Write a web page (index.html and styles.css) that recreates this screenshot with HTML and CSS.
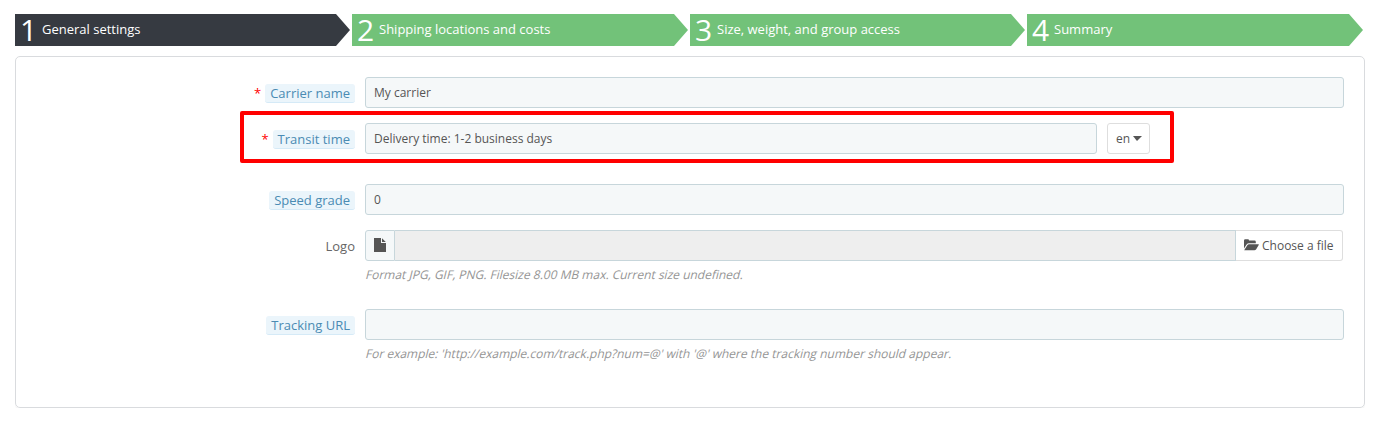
FILE: index.html
```html
<!DOCTYPE html>
<html lang="en">
<head>
<meta charset="utf-8">
<title>Carriers</title>
<link rel="stylesheet" href="styles.css">
</head>
<body>
<ol class="steps">
  <li class="step step-active"><span class="step-number">1</span><span class="step-label">General settings</span></li>
  <li class="step"><span class="step-number">2</span><span class="step-label">Shipping locations and costs</span></li>
  <li class="step"><span class="step-number">3</span><span class="step-label">Size, weight, and group access</span></li>
  <li class="step"><span class="step-number">4</span><span class="step-label">Summary</span></li>
</ol>
<main class="panel">
  <div class="row">
    <div class="label"><span class="required">*</span><span class="tip">Carrier name</span></div>
    <div class="field">My carrier</div>
  </div>
  <div class="row row-transit">
    <div class="label"><span class="required">*</span><span class="tip">Transit time</span></div>
    <div class="translatable">
      <div class="field">Delivery time: 1-2 business days</div>
      <button class="language" type="button">en<span class="caret"></span></button>
    </div>
    <div class="highlight"></div>
  </div>
  <div class="row">
    <div class="label"><span class="tip">Speed grade</span></div>
    <div class="field">0</div>
  </div>
  <div class="row">
    <div class="label">Logo</div>
    <div>
      <div class="upload">
        <span class="addon"><svg class="file-icon" width="12" height="14" viewBox="0 0 12 14"><path d="M0 0H7V5H12V14H0Z M8 0.2L11.8 4H8Z"/></svg></span>
        <span class="filename"></span>
        <button class="choose" type="button"><svg class="folder-icon" width="15" height="12" viewBox="0 0 15 12"><path d="M0 9.6V1.4Q0 .2 1.2 .2H4Q5 .2 5 1.6H10.6Q11.8 1.6 11.8 2.8V4.2H5Q3.5 4.2 2.6 5.4Z M.2 11.2L3.3 6.2Q3.9 5.2 5 5.2H14.3Q15.2 5.2 14.7 6L12.2 10.2Q11.5 11.3 10.4 11.3H.6Q.2 11.3 .2 11.2Z"/></svg>Choose a file</button>
      </div>
      <p class="help">Format JPG, GIF, PNG. Filesize 8.00 MB max. Current size undefined.</p>
    </div>
  </div>
  <div class="row">
    <div class="label"><span class="tip">Tracking URL</span></div>
    <div>
      <div class="field"></div>
      <p class="help">For example: 'http://example.com/track.php?num=@' with '@' where the tracking number should appear.</p>
    </div>
  </div>
</main>
</body>
</html>
```
FILE: styles.css
```css
* { box-sizing: border-box; }
body {
  margin: 0;
  padding: 14px 13px 0 15px;
  background: #fff;
  color: #555;
  font: 12px/17px "Open Sans", sans-serif;
}
.steps {
  display: grid;
  grid-template-columns: 335px 336px 335px 336px;
  gap: 2px;
  width: 1348px;
  margin: 0 0 10px;
  padding: 0;
  list-style: none;
}
.step {
  display: flex;
  align-items: center;
  height: 32px;
  padding-left: 5px;
  background: #72c279;
  color: #fff;
  clip-path: polygon(0 0, calc(100% - 14px) 0, 100% 50%, calc(100% - 14px) 100%, 0 100%);
}
.step-active { background: #363a41; }
.step-number {
  width: 22px;
  font-size: 30px;
  line-height: 32px;
}
.step-label { font-size: 13px; padding-bottom: 2px; }
.panel {
  width: 1350px;
  height: 352px;
  padding: 20px;
  border: 1px solid #d9dbde;
  border-radius: 5px;
  box-shadow: 0 2px 0 rgba(0, 0, 0, .03);
}
.row {
  display: grid;
  grid-template-columns: 319px 979px;
  column-gap: 10px;
  align-items: start;
  height: 31px;
  margin-bottom: 15px;
}
.row:nth-child(4) { height: 64px; }
.row-transit { position: relative; margin-bottom: 30px; }
.highlight {
  position: absolute;
  left: 204px;
  top: -12px;
  width: 934px;
  height: 52px;
  border: 4px solid #f00;
  border-radius: 2px;
}
.label {
  display: flex;
  justify-content: flex-end;
  align-items: center;
  height: 33px;
  font-size: 13px;
  color: #666;
}
.required { margin: -1px 4px 0 0; color: #f00; font-size: 13px; }
.tip {
  height: 19px;
  padding: 0 5px;
  border-bottom: 1px solid #d5eaf7;
  border-radius: 3px;
  background: #ebf5fb;
  color: #4a8bb3;
  line-height: 19px;
}
.field {
  height: 31px;
  padding: 6px 8px;
  border: 1px solid #c7d6db;
  border-radius: 3px;
  background: #f5f8f9;
}
.translatable { display: flex; gap: 10px; }
.translatable .field { width: 732px; }
.language, .choose {
  display: flex;
  align-items: center;
  height: 31px;
  padding: 0 8px;
  border: 1px solid #dedede;
  border-radius: 3px;
  background: #fff;
  color: #555;
  font: inherit;
}
.language { width: 43px; gap: 3px; }
.caret {
  border: 4.5px solid transparent;
  border-top: 5px solid #555;
  border-bottom: 0;
  border-left-width: 4px;
  border-right-width: 5px;
}
.upload { display: flex; width: 978px; }
.addon {
  display: flex;
  align-items: center;
  width: 30px;
  height: 31px;
  padding: 0 8px 2px;
  border: 1px solid #c7d6db;
  border-radius: 3px 0 0 3px;
  background: #f5f8f9;
}
.filename {
  flex: 1;
  border: solid #c7d6db;
  border-width: 1px 1px 1px 0;
  background: #eee;
}
.choose { width: 107px; gap: 3px; border-left: 0; border-radius: 0 3px 3px 0; white-space: nowrap; }
.file-icon, .folder-icon { flex: none; fill: #555; }
.folder-icon { margin-top: -2px; }
/* Slanted upright face keeps the double-storey "a" in hints. */
.help {
  margin: 5px 0 0;
  color: #959595;
  transform: skewX(-14deg);
  transform-origin: 0 13px;
}
```
